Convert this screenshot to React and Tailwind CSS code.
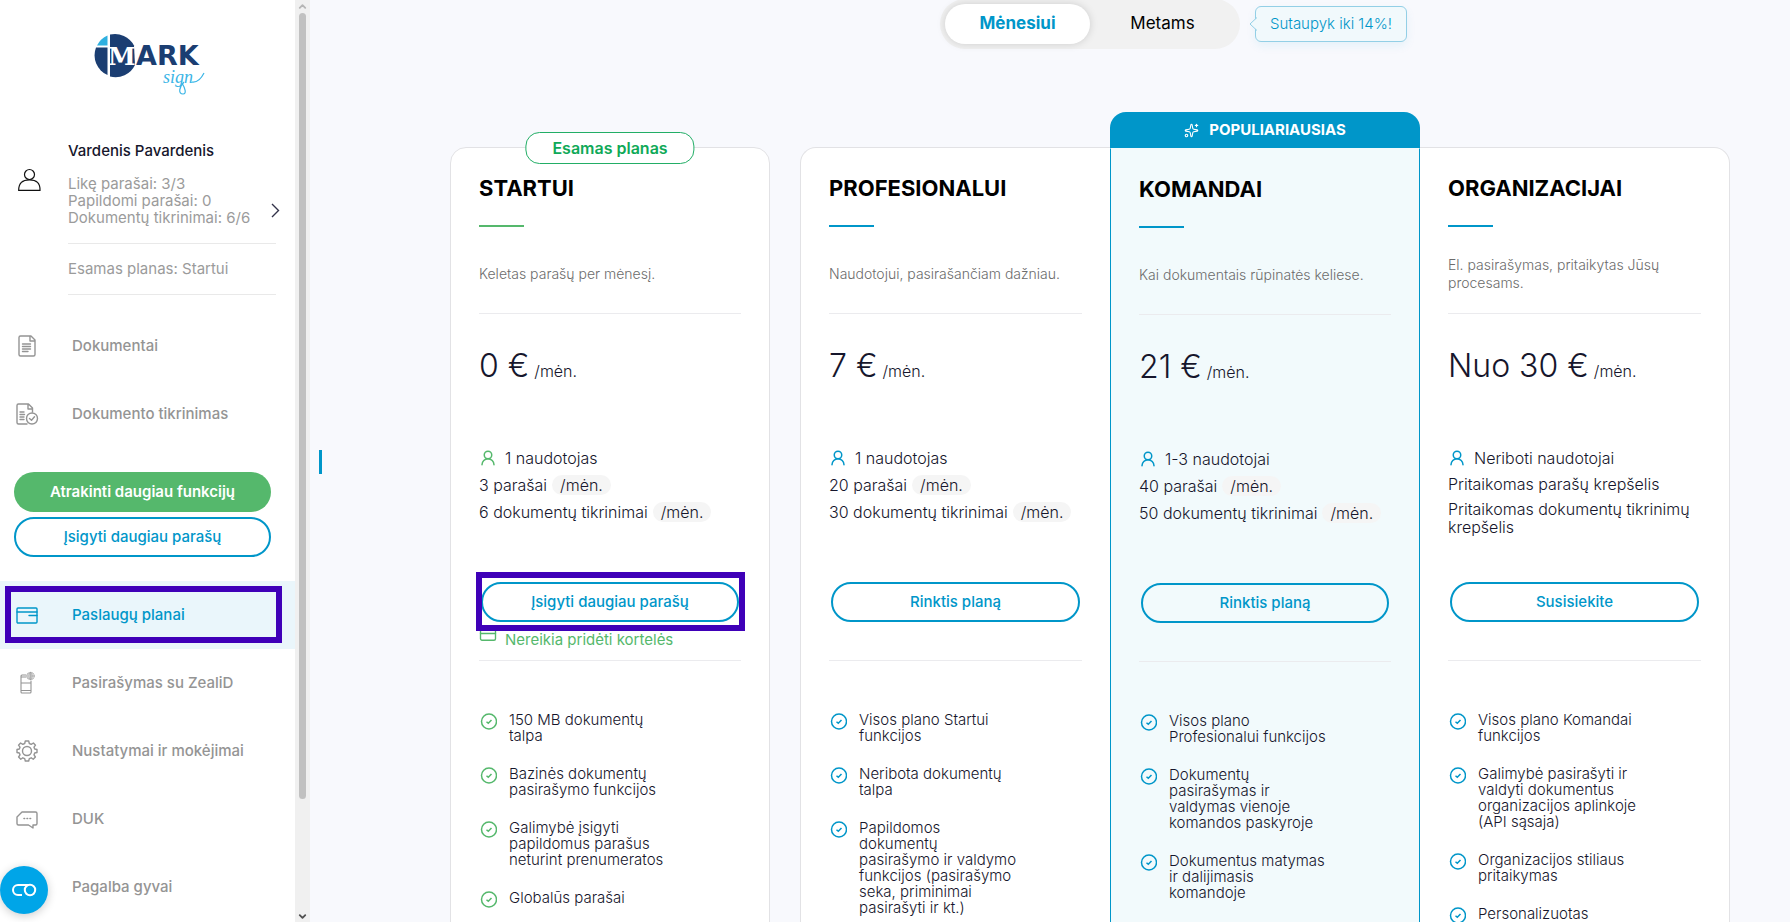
import { useState } from 'react'
import { Sparkles, UserRound, CreditCard, ChevronUp, ChevronDown } from 'lucide-react'

const PLANS = {
  startui: {
    title: 'STARTUI',
    desc: 'Keletas parašų per mėnesį.',
    price: '0 €',
    users: '1 naudotojas',
    limits: [{ text: '3 parašai', monthly: true }, { text: '6 dokumentų tikrinimai', monthly: true }],
    action: 'Įsigyti daugiau parašų',
    features: [
      '150 MB dokumentų\ntalpa',
      'Bazinės dokumentų\npasirašymo funkcijos',
      'Galimybė įsigyti\npapildomus parašus\nneturint prenumeratos',
      'Globalūs parašai',
    ],
  },
  profesionalui: {
    title: 'PROFESIONALUI',
    desc: 'Naudotojui, pasirašančiam dažniau.',
    price: '7 €',
    users: '1 naudotojas',
    limits: [{ text: '20 parašai', monthly: true }, { text: '30 dokumentų tikrinimai', monthly: true }],
    action: 'Rinktis planą',
    features: [
      'Visos plano Startui\nfunkcijos',
      'Neribota dokumentų\ntalpa',
      'Papildomos\ndokumentų\npasirašymo ir valdymo\nfunkcijos (pasirašymo\nseka, priminimai\npasirašyti ir kt.)',
    ],
  },
  komandai: {
    title: 'KOMANDAI',
    desc: 'Kai dokumentais rūpinatės keliese.',
    price: '21 €',
    users: '1-3 naudotojai',
    limits: [{ text: '40 parašai', monthly: true }, { text: '50 dokumentų tikrinimai', monthly: true }],
    action: 'Rinktis planą',
    features: [
      'Visos plano\nProfesionalui funkcijos',
      'Dokumentų\npasirašymas ir\nvaldymas vienoje\nkomandos paskyroje',
      'Dokumentus matymas\nir dalijimasis\nkomandoje',
    ],
  },
  organizacijai: {
    title: 'ORGANIZACIJAI',
    desc: 'El. pasirašymas, pritaikytas Jūsų procesams.',
    price: 'Nuo 30 €',
    users: 'Neriboti naudotojai',
    limits: [{ text: 'Pritaikomas parašų krepšelis' }, { text: 'Pritaikomas dokumentų tikrinimų krepšelis' }],
    action: 'Susisiekite',
    features: [
      'Visos plano Komandai\nfunkcijos',
      'Galimybė pasirašyti ir\nvaldyti dokumentus\norganizacijos aplinkoje\n(API sąsaja)',
      'Organizacijos stiliaus\npritaikymas',
      'Personalizuotas',
    ],
  },
}

function Logo() {
  return (
    <svg viewBox="0 0 112 62" className="h-[62px] w-[112px]" role="img" aria-label="Mark Sign">
      <path d="M13.500 2.500A21.500 21.500 0 0 0 3 12.500H13.500Z" fill="#2fb0e0" />
      <path d="M13.500 14.500H2A21.500 21.500 0 0 0 13.500 42Z" fill="#1b3e72" />
      <path d="M16 1.500A21.500 21.500 0 0 1 40 12.500L41 32A21.500 21.500 0 0 1 16 43.500Z" fill="#1b3e72" />
      <text x="14" y="32" fontFamily="'DejaVu Serif', serif" fontWeight="700" fontSize="25" fill="#fff">M</text>
      <text x="42" y="32" fontFamily="'DejaVu Sans', sans-serif" fontWeight="700" fontSize="27" fill="#1b3e72">ARK</text>
      <text x="69" y="50" fontFamily="'Liberation Serif', serif" fontStyle="italic" fontSize="18" fill="#3bb5e6">sign</text>
      <path d="M88 50C91 55 93 61 89 61C84 61 85 54 90 49" fill="none" stroke="#3bb5e6" strokeWidth="1.200" />
      <path d="M98 49Q105 50 110 40" fill="none" stroke="#3bb5e6" strokeWidth="1.200" />
    </svg>
  )
}

function NavIcon({ children }) {
  return (
    <svg width="24" height="24" viewBox="0 0 24 24" fill="none" stroke="currentColor" strokeWidth="1.400" strokeLinecap="round" strokeLinejoin="round" aria-hidden="true">
      {children}
    </svg>
  )
}

const DocIcon = () => (
  <NavIcon>
    <path d="M16 2H5.500Q4 2 4 3.500V20.500Q4 22 5.500 22H18.500Q20 22 20 20.500V6ZM15 2V7H20" />
    <path d="M7.500 10H15.500M7.500 12.500H15.500M7.500 15H15.500M7.500 17.500H13" />
  </NavIcon>
)

const DocCheckIcon = () => (
  <NavIcon>
    <path d="M12 22H3.500Q2 22 2 20.500V3.500Q2 2 3.500 2H13.500L17.500 6V10M13 2V7H17.500" />
    <path d="M5 10H9M5 12.500H9.500M5 15H9M5 17.500H9" />
    <circle cx="17" cy="16.500" r="5.500" />
    <path d="M14.500 16.500L16.500 18.300L19.500 14.800" />
  </NavIcon>
)

const CardIcon = () => (
  <NavIcon>
    <rect x="2" y="5" width="20" height="15" rx="1" />
    <path d="M2 9H22M14 12.500H22" />
  </NavIcon>
)

const PhoneIcon = () => (
  <NavIcon>
    <path d="M11 4H7Q6 4 6 5V21Q6 22 7 22H15Q16 22 16 21V10M6 6H11M6 12H16M6 19.500H16" strokeWidth="1.100" />
    <g strokeWidth=".6">
      <circle cx="15.500" cy="5" r="3.700" />
      <path d="M12 5H19M15.500 1.500V8.500M13 3H18M13 7H18" />
      <ellipse cx="15.500" cy="5" rx="1.600" ry="3.500" />
    </g>
  </NavIcon>
)

const GearIcon = () => (
  <NavIcon>
    <circle cx="12" cy="12" r="4.500" />
    <path d="M10.300 2H13.700L14.300 4.500L16.200 5.300L18.400 4L20.500 6.200L19 8.200L19.700 10L22 10.500V13.500L19.700 14L19 15.800L20.400 18L18.200 20.200L16.200 18.800L14.300 19.600L13.700 22H10.300L9.700 19.600L7.800 18.800L5.800 20.200L3.600 18L5 15.800L4.300 14L2 13.500V10.500L4.300 10L5 8.200L3.500 6.200L5.600 4L7.800 5.300L9.700 4.500Z" />
  </NavIcon>
)

const ChatIcon = () => (
  <NavIcon>
    <path d="M7 5H20.500Q22 5 22 6.500V16.500Q22 18 20.500 18H18V21L13.500 18H3.500Q2 18 2 16.500V10Z" />
    <path d="M9 11.500H9.600M12 11.500H12.600M15 11.500H15.600" strokeWidth="1.600" />
  </NavIcon>
)

function NavItem({ icon: Icon, label }) {
  return (
    <li>
      <a href="#" className="flex h-[68px] items-center font-medium text-[#949494]">
        <span className="w-[72px] pl-[15px]">{Icon && <Icon />}</span>
        {label}
      </a>
    </li>
  )
}

function Sidebar() {
  return (
    <aside className="flex w-[310px] shrink-0 bg-white">
      <div className="flex-1 overflow-hidden pt-[33px] text-[15px]">
        <div className="pl-[94px]"><Logo /></div>

        {/* Account */}
        <div className="mt-[46px] mb-[17px] flex">
          <svg width="24" height="24" viewBox="0 0 24 24" fill="none" stroke="#111" strokeWidth="1.200" className="mt-[27px] mr-[27px] ml-[17px] shrink-0" aria-hidden="true">
            <circle cx="12.500" cy="6.500" r="5" />
            <path d="M1.700 22.300Q1.700 11.800 12.500 11.800T23 22.300Z" />
          </svg>
          <div className="w-[208px] text-[#9b9b9b]">
            <p className="leading-5 font-medium text-[#16162c]">Vardenis Pavardenis</p>
            <button className="mt-3.5 flex w-[212px] items-end justify-between text-left leading-[17px]">
              <span>
                Likę parašai: 3/3<br />
                Papildomi parašai: 0<br />
                Dokumentų tikrinimai: 6/6
              </span>
              <svg width="9" height="15" viewBox="0 0 9 15" fill="none" stroke="#33334a" strokeWidth="1.400" className="mb-2"><path d="M1 1L7.500 7.500L1 14" /></svg>
            </button>
            <hr className="mt-[17px] border-[#e9e9e9]" />
            <p className="mt-4 leading-[18px]">Esamas planas: Startui</p>
            <hr className="mt-4 border-[#e9e9e9]" />
          </div>
        </div>

        <nav>
          <ul>
            <NavItem icon={DocIcon} label="Dokumentai" />
            <NavItem icon={DocCheckIcon} label="Dokumento tikrinimas" />
          </ul>
          <div className="my-6 mr-6 ml-3.5 flex flex-col gap-[5px]">
            <button className="h-10 rounded-full bg-[#55b86c] font-semibold text-white">Atrakinti daugiau funkcijų</button>
            <button className="h-10 rounded-full border-2 border-[#0096c9] font-medium text-[#0096c9]">Įsigyti daugiau parašų</button>
          </div>
          <ul>
            <li className="relative">
              <a href="#" aria-current="page" className="flex h-[68px] items-center bg-[#eaf6fb] font-medium text-[#0096c9]">
                <span className="w-[72px] pl-[15px]"><CardIcon /></span>
                Paslaugų planai
              </a>
              <span className="pointer-events-none absolute top-[5px] right-[13px] bottom-1.5 left-[5px] border-6 border-[#3f00b8]" />
            </li>
            <NavItem icon={PhoneIcon} label="Pasirašymas su ZealiD" />
            <NavItem icon={GearIcon} label="Nustatymai ir mokėjimai" />
            <NavItem icon={ChatIcon} label="DUK" />
            <NavItem label="Pagalba gyvai" />
          </ul>
        </nav>
      </div>

      {/* Scrollbar */}
      <div className="flex w-[15px] flex-col items-center bg-[#f0f0f0]">
        <ChevronUp size={11} strokeWidth={4} className="my-px shrink-0 text-[#b5b5b5]" />
        <div className="mb-[112px] w-[7px] flex-1 rounded-full bg-[#c1c1c1]" />
        <ChevronDown size={11} strokeWidth={4} className="shrink-0 text-[#505050]" />
      </div>
    </aside>
  )
}

function CheckIcon({ className }) {
  return (
    <svg width="18" height="18" viewBox="0 0 18 18" fill="none" stroke="currentColor" strokeWidth="1.500" className={className} aria-hidden="true">
      <circle cx="10" cy="9.500" r="7.500" />
      <path d="M7.500 9.700L9.300 11.300L12.500 8" />
    </svg>
  )
}

function PlanBody({ plan, current }) {
  const accent = current ? 'text-[#55b86c]' : 'text-[#0096c9]'
  return (
    <div className="px-7 pt-[26px] text-[#16162c]">
      <h2 className="text-[22px] leading-7 font-bold text-black">{plan.title}</h2>
      <div className={`mt-[23px] h-0.5 w-[45px] ${current ? 'bg-[#55b86c]' : 'bg-[#0096c9]'}`} />
      <div className="mt-[29px] flex h-9 items-center">
        <p className="text-sm leading-[18px] font-light text-[#6c6c6c]">{plan.desc}</p>
      </div>
      <hr className="mt-[21px] border-[#ebebee]" />
      <p className="mt-8 h-10 text-[32px] leading-10 font-light">
        {plan.price} <span className="-ml-1 text-base">/mėn.</span>
      </p>

      <ul className="mt-[62px] flex min-h-[90px] flex-col gap-[7px] text-base leading-[18px] font-light">
        <li className="flex h-5 items-center gap-2">
          <UserRound size={18} strokeWidth={2} className={accent} />
          {plan.users}
        </li>
        {plan.limits.map(l => (
          <li key={l.text} className="flex items-center gap-[5px]">
            {l.text}
            {l.monthly && <span className="h-5 rounded-full bg-[#f5f5f5] px-2 leading-5">/mėn.</span>}
          </li>
        ))}
      </ul>

      <div className="relative mx-0.5 mt-11">
        <button className="h-10 w-full rounded-full border-2 border-[#0096c9] text-[15px] font-medium text-[#0096c9]">{plan.action}</button>
        {current && <span className="pointer-events-none absolute -top-2.5 -right-[6px] -bottom-[9px] -left-[5px] border-6 border-[#3f00b8]" />}
      </div>
      <div className="flex h-[38px] gap-2 pt-2 text-[15px] leading-5 text-[#55b86c]">
        {current && (
          <>
            <CreditCard size={18} strokeWidth={1.8} className="-mt-1" />
            Nereikia pridėti kortelės
          </>
        )}
      </div>
      <hr className="border-[#ebebee]" />

      <ul className="mt-[51px] flex flex-col gap-[22px] text-[15px] leading-4 font-light">
        {plan.features.map(f => (
          <li key={f} className="flex gap-3 whitespace-pre">
            <CheckIcon className={`-mb-0.5 shrink-0 ${accent}`} />
            {f}
          </li>
        ))}
      </ul>
    </div>
  )
}

export default function App() {
  const [period, setPeriod] = useState('month')
  const tab = active => `flex-1 rounded-full text-[17px] ${active ? 'bg-white font-bold text-[#0096c9] shadow-[0_0_8px_rgba(0,0,0,0.15)]' : 'text-black'}`

  return (
    <div className="flex h-screen overflow-hidden bg-[#f8f9fd] font-[Inter,'Noto_Sans',sans-serif]">
      <Sidebar />
      <div className="w-20 shrink-0 pt-[450px] pl-[9px]">
        <div className="h-6 w-[3px] bg-[#0096c9]" />
      </div>

      <main className="flex-1 px-[60px]">
        {/* Billing period */}
        <div className="relative mx-auto -mt-px flex h-[50px] w-[300px] rounded-full bg-[#f1f1f1] p-[5px]">
          <button className={tab(period === 'month')} onClick={() => setPeriod('month')}>Mėnesiui</button>
          <button className={tab(period === 'year')} onClick={() => setPeriod('year')}>Metams</button>
          <div className="absolute top-[7px] left-[315px] h-9 rounded-md border border-[#93cfe6] bg-[#f1f9fc] px-3.5 text-[15px] leading-[34px] font-light whitespace-nowrap text-[#0096c9] shadow-[0_4px_10px_rgba(0,150,200,0.08)]">
            <svg width="8" height="14" viewBox="0 0 8 14" className="absolute top-2.5 -left-[7px]" aria-hidden="true">
              <path d="M8 .5L1 7L8 13.500" fill="#f1f9fc" stroke="#93cfe6" />
            </svg>
            Sutaupyk iki 14%!
          </div>
        </div>

        <div className="mt-[98px] grid grid-cols-[32fr_93fr] gap-[30px]">
          <section className="relative rounded-2xl border border-[#e2e2e5] bg-white pb-10">
            <span className="absolute -top-4 left-1/2 h-8 -translate-x-1/2 rounded-[14px] border border-[#22ae66] bg-white px-[26px] text-base leading-[30px] font-semibold whitespace-nowrap text-[#0fa958]">Esamas planas</span>
            <PlanBody plan={PLANS.startui} current />
          </section>

          <div className="grid grid-cols-3">
            <section className="rounded-l-2xl border border-r-0 border-[#e2e2e5] bg-white">
              <PlanBody plan={PLANS.profesionalui} />
            </section>
            <section className="-mt-[35px] flex flex-col">
              <div className="flex h-9 items-center justify-center gap-2.5 rounded-t-2xl bg-[#0096c9] text-[15px] font-bold text-white">
                <Sparkles size={15} strokeWidth={1.8} />
                POPULIARIAUSIAS
              </div>
              <div className="flex-1 border border-[#0096c9] border-t-transparent bg-[#f2fafc]">
                <PlanBody plan={PLANS.komandai} />
              </div>
            </section>
            <section className="rounded-r-2xl border border-l-0 border-[#e2e2e5] bg-white">
              <PlanBody plan={PLANS.organizacijai} />
            </section>
          </div>
        </div>
      </main>

      {/* Chat launcher */}
      <button aria-label="Pagalba" className="fixed bottom-2 left-0 flex size-12 items-center justify-center rounded-full bg-[#00a5e8] shadow-[0_2px_10px_rgba(0,0,0,0.2)]">
        <svg width="26" height="14" viewBox="0 0 26 14" fill="none" stroke="#fff" strokeWidth="2">
          <path d="M18 2H7A5 5 0 0 0 7 12H11" />
          <circle cx="19" cy="7" r="5.200" />
        </svg>
      </button>
    </div>
  )
}
